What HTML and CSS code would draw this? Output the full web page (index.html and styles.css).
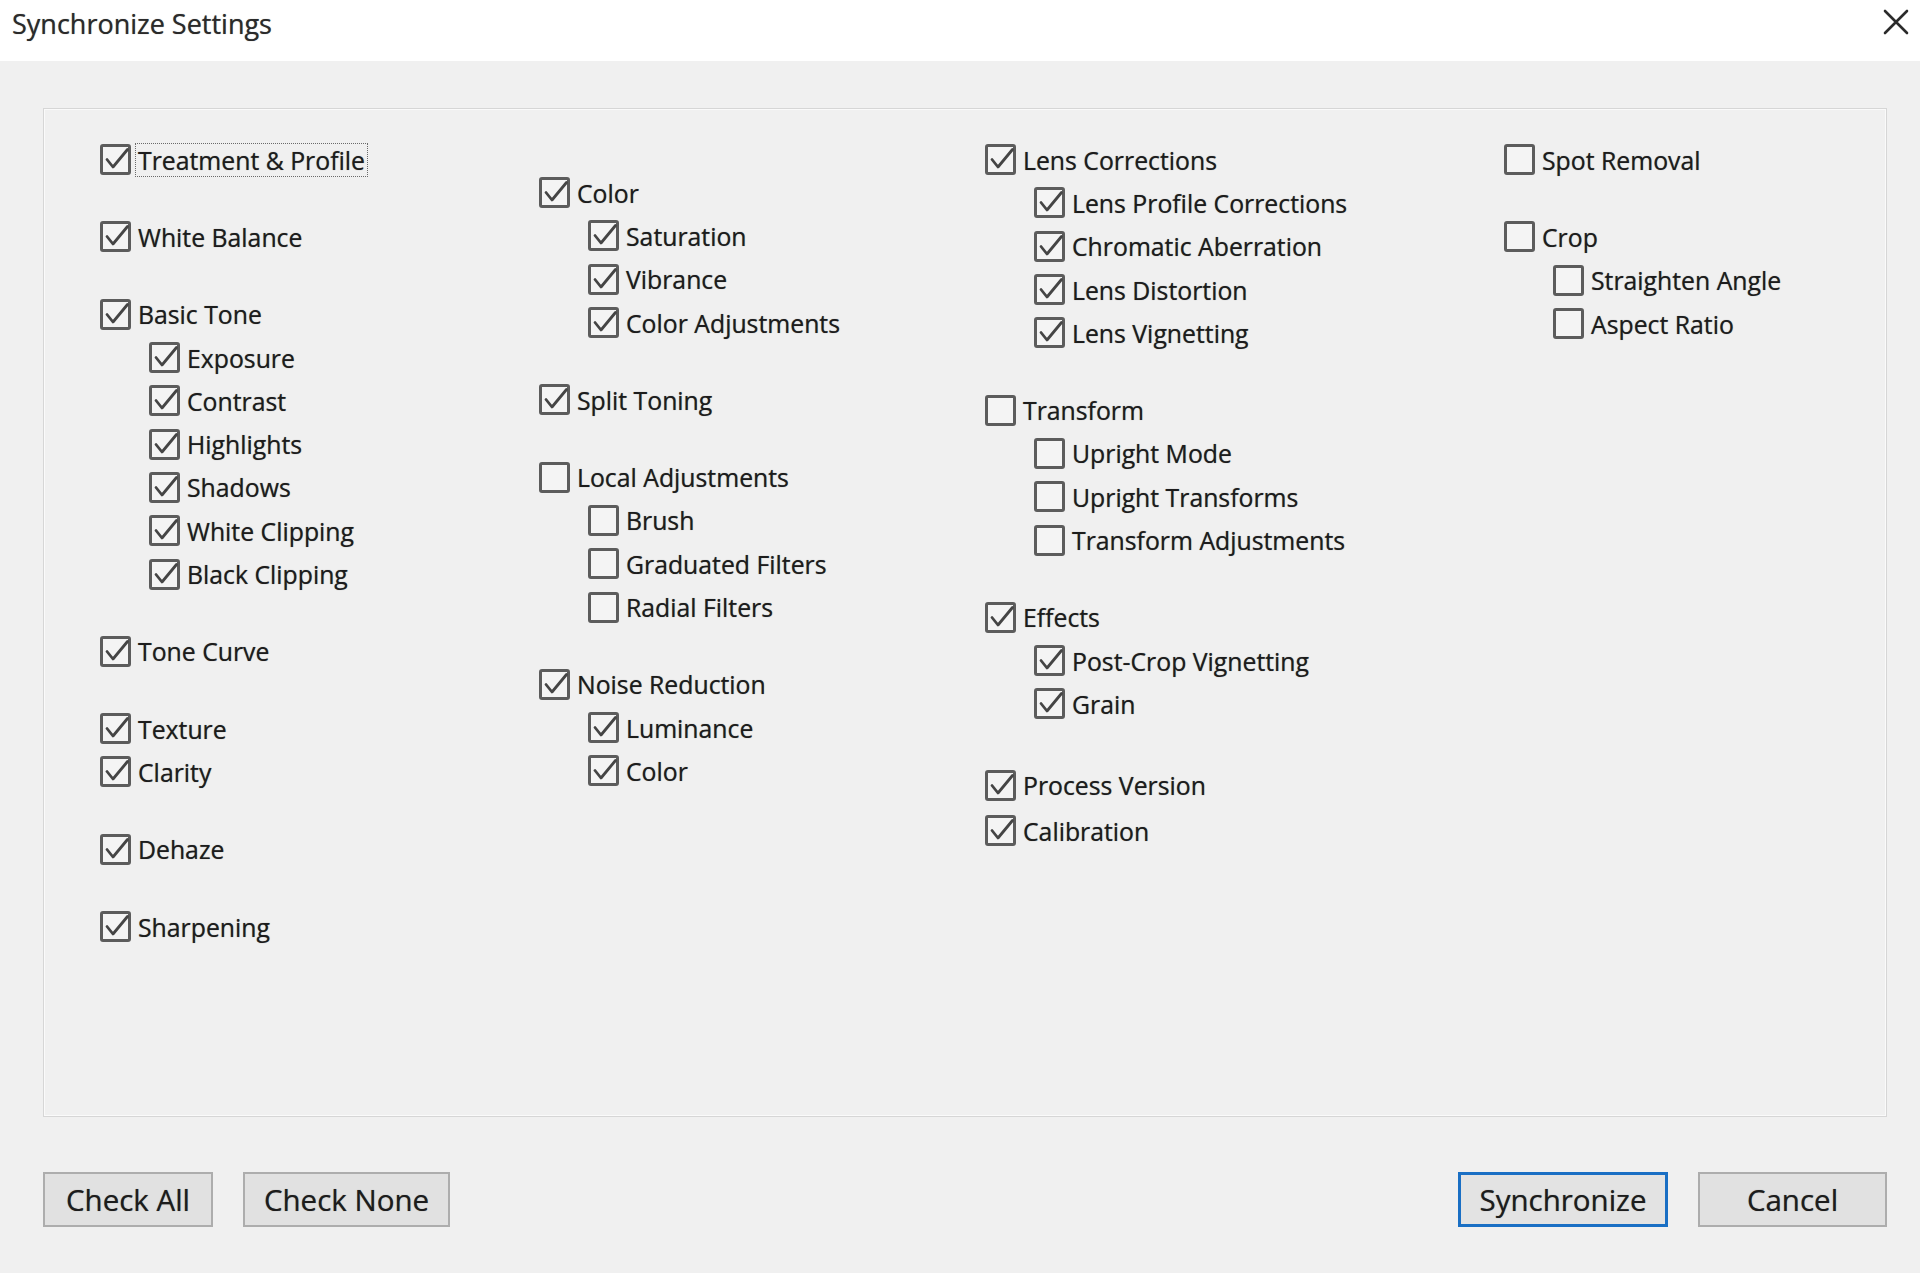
FILE: index.html
```html
<!DOCTYPE html>
<html lang="en">
<head>
<meta charset="utf-8">
<title>Synchronize Settings</title>
<link rel="stylesheet" href="styles.css">
</head>
<body>
<svg class="defs" width="0" height="0" aria-hidden="true">
  <symbol id="tick" viewBox="0 0 31 31">
    <polyline points="7,15.5 13,23 27.5,5.5" fill="none" stroke="#454545" stroke-width="2.8" stroke-linejoin="round" stroke-linecap="round"/>
  </symbol>
</svg>
<div class="dialog">
  <header class="titlebar">
    <span class="title">Synchronize Settings</span>
    <span class="close" aria-label="Close">
      <svg viewBox="0 0 28 28" width="28" height="28"><path d="M3 3 L25 25 M25 3 L3 25" stroke="#2b2b2b" stroke-width="2.6" stroke-linecap="round"/></svg>
    </span>
  </header>

  <section class="panel">
    <div class="col">
      <div class="group">
        <div class="row"><span class="cb on"><svg><use href="#tick"/></svg></span><span class="lbl focus">Treatment &amp; Profile</span></div>
      </div>
      <div class="group">
        <div class="row"><span class="cb on"><svg><use href="#tick"/></svg></span><span class="lbl">White Balance</span></div>
      </div>
      <div class="group">
        <div class="row"><span class="cb on"><svg><use href="#tick"/></svg></span><span class="lbl">Basic Tone</span></div>
        <div class="row sub"><span class="cb on"><svg><use href="#tick"/></svg></span><span class="lbl">Exposure</span></div>
        <div class="row sub"><span class="cb on"><svg><use href="#tick"/></svg></span><span class="lbl">Contrast</span></div>
        <div class="row sub"><span class="cb on"><svg><use href="#tick"/></svg></span><span class="lbl">Highlights</span></div>
        <div class="row sub"><span class="cb on"><svg><use href="#tick"/></svg></span><span class="lbl">Shadows</span></div>
        <div class="row sub"><span class="cb on"><svg><use href="#tick"/></svg></span><span class="lbl">White Clipping</span></div>
        <div class="row sub"><span class="cb on"><svg><use href="#tick"/></svg></span><span class="lbl">Black Clipping</span></div>
      </div>
      <div class="group">
        <div class="row"><span class="cb on"><svg><use href="#tick"/></svg></span><span class="lbl">Tone Curve</span></div>
      </div>
      <div class="group">
        <div class="row"><span class="cb on"><svg><use href="#tick"/></svg></span><span class="lbl">Texture</span></div>
        <div class="row"><span class="cb on"><svg><use href="#tick"/></svg></span><span class="lbl">Clarity</span></div>
      </div>
      <div class="group">
        <div class="row"><span class="cb on"><svg><use href="#tick"/></svg></span><span class="lbl">Dehaze</span></div>
      </div>
      <div class="group">
        <div class="row"><span class="cb on"><svg><use href="#tick"/></svg></span><span class="lbl">Sharpening</span></div>
      </div>
    </div>

    <div class="col col2">
      <div class="group">
        <div class="row"><span class="cb on"><svg><use href="#tick"/></svg></span><span class="lbl">Color</span></div>
        <div class="row sub"><span class="cb on"><svg><use href="#tick"/></svg></span><span class="lbl">Saturation</span></div>
        <div class="row sub"><span class="cb on"><svg><use href="#tick"/></svg></span><span class="lbl">Vibrance</span></div>
        <div class="row sub"><span class="cb on"><svg><use href="#tick"/></svg></span><span class="lbl">Color Adjustments</span></div>
      </div>
      <div class="group">
        <div class="row"><span class="cb on"><svg><use href="#tick"/></svg></span><span class="lbl">Split Toning</span></div>
      </div>
      <div class="group">
        <div class="row"><span class="cb"></span><span class="lbl">Local Adjustments</span></div>
        <div class="row sub"><span class="cb"></span><span class="lbl">Brush</span></div>
        <div class="row sub"><span class="cb"></span><span class="lbl">Graduated Filters</span></div>
        <div class="row sub"><span class="cb"></span><span class="lbl">Radial Filters</span></div>
      </div>
      <div class="group">
        <div class="row"><span class="cb on"><svg><use href="#tick"/></svg></span><span class="lbl">Noise Reduction</span></div>
        <div class="row sub"><span class="cb on"><svg><use href="#tick"/></svg></span><span class="lbl">Luminance</span></div>
        <div class="row sub"><span class="cb on"><svg><use href="#tick"/></svg></span><span class="lbl">Color</span></div>
      </div>
    </div>

    <div class="col">
      <div class="group">
        <div class="row"><span class="cb on"><svg><use href="#tick"/></svg></span><span class="lbl">Lens Corrections</span></div>
        <div class="row sub"><span class="cb on"><svg><use href="#tick"/></svg></span><span class="lbl">Lens Profile Corrections</span></div>
        <div class="row sub"><span class="cb on"><svg><use href="#tick"/></svg></span><span class="lbl">Chromatic Aberration</span></div>
        <div class="row sub"><span class="cb on"><svg><use href="#tick"/></svg></span><span class="lbl">Lens Distortion</span></div>
        <div class="row sub"><span class="cb on"><svg><use href="#tick"/></svg></span><span class="lbl">Lens Vignetting</span></div>
      </div>
      <div class="group">
        <div class="row"><span class="cb"></span><span class="lbl">Transform</span></div>
        <div class="row sub"><span class="cb"></span><span class="lbl">Upright Mode</span></div>
        <div class="row sub"><span class="cb"></span><span class="lbl">Upright Transforms</span></div>
        <div class="row sub"><span class="cb"></span><span class="lbl">Transform Adjustments</span></div>
      </div>
      <div class="group">
        <div class="row"><span class="cb on"><svg><use href="#tick"/></svg></span><span class="lbl">Effects</span></div>
        <div class="row sub"><span class="cb on"><svg><use href="#tick"/></svg></span><span class="lbl">Post-Crop Vignetting</span></div>
        <div class="row sub"><span class="cb on"><svg><use href="#tick"/></svg></span><span class="lbl">Grain</span></div>
      </div>
      <div class="group group-wide">
        <div class="row"><span class="cb on"><svg><use href="#tick"/></svg></span><span class="lbl">Process Version</span></div>
        <div class="row row-loose"><span class="cb on"><svg><use href="#tick"/></svg></span><span class="lbl">Calibration</span></div>
      </div>
    </div>

    <div class="col">
      <div class="group">
        <div class="row"><span class="cb"></span><span class="lbl">Spot Removal</span></div>
      </div>
      <div class="group">
        <div class="row"><span class="cb"></span><span class="lbl">Crop</span></div>
        <div class="row sub"><span class="cb"></span><span class="lbl">Straighten Angle</span></div>
        <div class="row sub"><span class="cb"></span><span class="lbl">Aspect Ratio</span></div>
      </div>
    </div>
  </section>

  <footer class="buttons">
    <div class="btn-group">
      <button class="btn btn-all">Check All</button>
      <button class="btn btn-none">Check None</button>
    </div>
    <div class="btn-group">
      <button class="btn btn-sync">Synchronize</button>
      <button class="btn btn-cancel">Cancel</button>
    </div>
  </footer>
</div>
</body>
</html>
```

FILE: styles.css
```css
* { box-sizing: border-box; }

html, body {
  margin: 0;
  padding: 0;
  background: #f0f0f0;
}

body {
  width: 1920px;
  height: 1273px;
  overflow: hidden;
  font-family: "Open Sans", "Noto Sans", "DejaVu Sans", sans-serif;
  color: #1c1c1c;
}

.defs { position: absolute; width: 0; height: 0; }

.dialog {
  display: flex;
  flex-direction: column;
  height: 100%;
}

/* Title bar */
.titlebar {
  height: 61px;
  background: #ffffff;
  display: flex;
  justify-content: space-between;
  align-items: flex-start;
  padding: 0 10px 0 12px;
  flex: none;
}

.title {
  font-size: 27px;
  line-height: 36px;
  padding-top: 6px;
  color: #2a2a2a;
  text-shadow: 0 0 0.8px rgba(0, 0, 0, 0.55);
}

.close {
  display: block;
  margin-top: 8px;
  width: 28px;
  height: 28px;
}
.close svg { display: block; }

/* Main panel */
.panel {
  margin: 47px 33px 0 43px;
  height: 1009px;
  flex: none;
  border: 1px solid #d6d6d6;
  box-shadow: inset 1px 1px 0 #fafafa, inset -1px -1px 0 #fafafa;
  background: #f0f0f0;
  padding: 29px 0 0 56px;
  display: grid;
  grid-template-columns: 439px 446px 519px 1fr;
  align-items: start;
}

.col {
  display: flex;
  flex-direction: column;
}

.col2 { padding-top: 33px; }

.group + .group { margin-top: 34px; }
.group-wide.group { margin-top: 38px; }

.row {
  height: 43.3px;
  display: flex;
  align-items: center;
  gap: 4px;
}
.row-loose { margin-top: 2px; }

.row.sub { padding-left: 49px; }

.cb {
  width: 31px;
  height: 31px;
  flex: none;
  border: 3px solid #5c5c5c;
  border-radius: 3px;
  background: #f4f4f4;
  position: relative;
}
.cb svg {
  position: absolute;
  left: -3px;
  top: -3px;
  width: 31px;
  height: 31px;
}

.lbl {
  font-size: 24.8px;
  line-height: 32px;
  padding: 0 2px;
  border: 1px solid transparent;
  white-space: nowrap;
  text-shadow: 0 0 0.8px rgba(0, 0, 0, 0.55);
}

.lbl.focus {
  border: 1px dotted #6a6a6a;
}

/* Buttons */
.buttons {
  margin: 55px 33px 0 43px;
  display: flex;
  justify-content: space-between;
  flex: none;
}

.btn-group {
  display: flex;
  gap: 30px;
}

.btn {
  height: 55px;
  font-family: "Open Sans", "Noto Sans", "DejaVu Sans", sans-serif;
  font-size: 29.5px;
  color: #1c1c1c;
  background: #e1e1e1;
  border: 2px solid #adadad;
  border-radius: 0;
  padding: 0;
  text-shadow: 0 0 0.8px rgba(0, 0, 0, 0.55);
}

.btn-all { width: 170px; }
.btn-none { width: 207px; }
.btn-sync {
  width: 210px;
  border: 3px solid #1a6fc4;
  background: #e3e3e3;
}
.btn-cancel { width: 189px; }
```
